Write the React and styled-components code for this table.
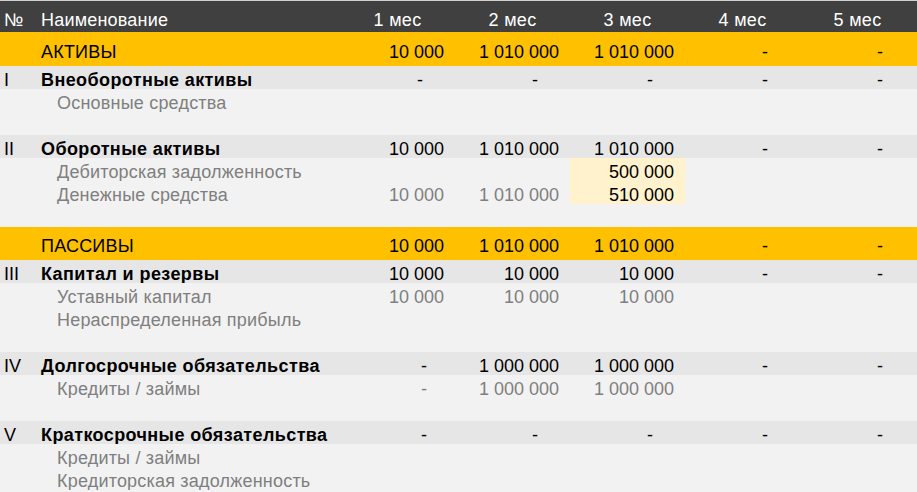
import React from "react";
import styled, { createGlobalStyle, css } from "styled-components";

const GlobalStyle = createGlobalStyle`
  html, body {
    margin: 0;
    padding: 0;
    background: #f2f2f2;
  }
  body {
    font-family: "Liberation Sans", Arial, sans-serif;
    font-size: 18px;
    color: #000;
  }
`;

const Table = styled.div`
  width: 917px;
  display: flex;
  flex-direction: column;
  border-top: 1px solid #cfcfcf;
`;

const kinds = {
  header: css`
    height: 31px;
    background: #404040;
    color: #fff;
    --pt: 9.5px;
  `,
  total: css`
    height: 33.5px;
    background: #ffc000;
    color: #000;
    --pt: 10.8px;
  `,
  section: css`
    height: 23px;
    background: #e6e6e6;
    color: #000;
    --pt: 5.2px;
  `,
  item: css`
    height: 23px;
    background: #f2f2f2;
    color: #7f7f7f;
    --pt: 5.2px;
  `,
};

const Row = styled.div`
  display: grid;
  grid-template-columns: 37px 303px repeat(5, 115px) 1fr;
  ${({ $kind }) => kinds[$kind]}
`;

const Cell = styled.div`
  padding-top: var(--pt);
  line-height: 18px;
  white-space: nowrap;
  box-sizing: border-box;
`;

const NumCell = styled(Cell)`
  padding-left: 4px;
`;

const NameCell = styled(Cell)`
  padding-left: ${({ $indent }) => ($indent ? "20px" : "4px")};
  font-weight: ${({ $bold }) => ($bold ? 700 : 400)};
  letter-spacing: ${({ $bold }) => ($bold ? "0.4px" : "0.2px")};
`;

const HeadCell = styled(Cell)`
  text-align: center;
  letter-spacing: 0.3px;
`;

const ValueCell = styled(Cell)`
  text-align: right;
  padding-right: ${({ $dash, $wide }) => ($dash ? ($wide ? "28px" : "32px") : "11px")};
  ${({ $hl }) =>
    $hl &&
    css`
      background: #fff2cc;
      color: #000;
    `}
`;

const months = ["1 мес", "2 мес", "3 мес", "4 мес", "5 мес"];

const rows = [
  { kind: "total", name: "АКТИВЫ", values: ["10 000", "1 010 000", "1 010 000", "-", "-"] },
  { kind: "section", num: "I", name: "Внеоборотные активы", values: ["-", "-", "-", "-", "-"] },
  { kind: "item", name: "Основные средства" },
  { kind: "item" },
  { kind: "section", num: "II", name: "Оборотные активы", values: ["10 000", "1 010 000", "1 010 000", "-", "-"] },
  { kind: "item", name: "Дебиторская задолженность", values: ["", "", "500 000", "", ""], hl: [2] },
  { kind: "item", name: "Денежные средства", values: ["10 000", "1 010 000", "510 000", "", ""], hl: [2] },
  { kind: "item" },
  { kind: "total", name: "ПАССИВЫ", values: ["10 000", "1 010 000", "1 010 000", "-", "-"] },
  { kind: "section", num: "III", name: "Капитал и резервы", values: ["10 000", "10 000", "10 000", "-", "-"] },
  { kind: "item", name: "Уставный капитал", values: ["10 000", "10 000", "10 000", "", ""] },
  { kind: "item", name: "Нераспределенная прибыль" },
  { kind: "item" },
  { kind: "section", num: "IV", name: "Долгосрочные обязательства", values: ["-", "1 000 000", "1 000 000", "-", "-"], wide: [0] },
  { kind: "item", name: "Кредиты / займы", values: ["-", "1 000 000", "1 000 000", "", ""], wide: [0] },
  { kind: "item" },
  { kind: "section", num: "V", name: "Краткосрочные обязательства", values: ["-", "-", "-", "-", "-"], wide: [0] },
  { kind: "item", name: "Кредиты / займы" },
  { kind: "item", name: "Кредиторская задолженность" },
];

export default function App() {
  return (
    <>
      <GlobalStyle />
      <Table>
        <Row $kind="header">
          <NumCell>№</NumCell>
          <NameCell>Наименование</NameCell>
          {months.map((m) => (
            <HeadCell key={m}>{m}</HeadCell>
          ))}
          <Cell />
        </Row>
        {rows.map((r, i) => {
          const values = r.values || ["", "", "", "", ""];
          return (
            <Row key={i} $kind={r.kind}>
              <NumCell>{r.num || ""}</NumCell>
              <NameCell $bold={r.kind === "section"} $indent={r.kind === "item"}>
                {r.name || ""}
              </NameCell>
              {values.map((v, j) => (
                <ValueCell
                  key={j}
                  $dash={v === "-"}
                  $wide={r.wide && r.wide.includes(j)}
                  $hl={r.hl && r.hl.includes(j)}
                >
                  {v}
                </ValueCell>
              ))}
              <Cell />
            </Row>
          );
        })}
      </Table>
    </>
  );
}
